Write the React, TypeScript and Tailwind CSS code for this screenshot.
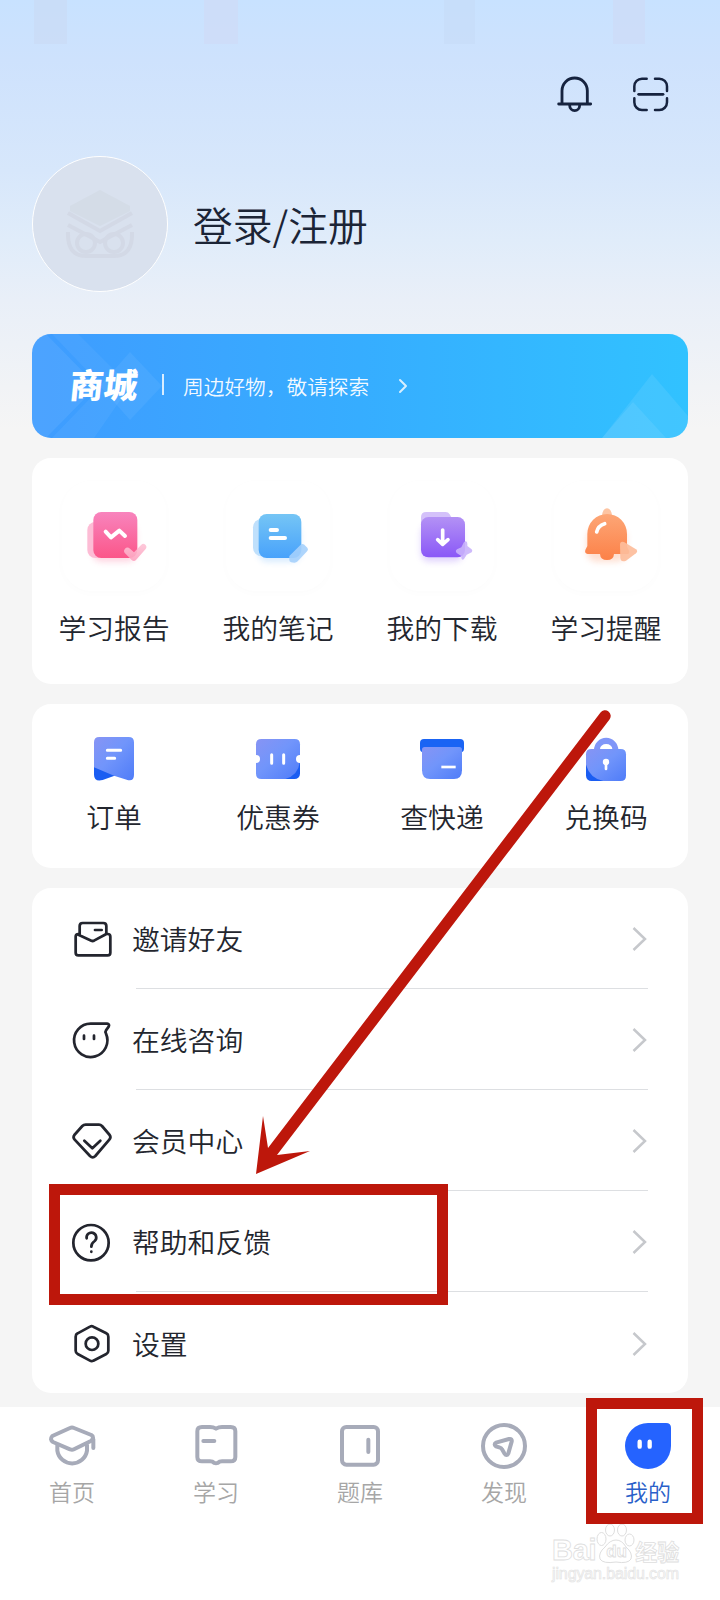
import type { ReactNode } from "react";
import { ChevronRight } from "lucide-react";

const BellIcon = () => (
  <svg viewBox="0 0 108 114" className="w-9 h-[38px]" fill="none" stroke="#16233f" strokeWidth="8.500" strokeLinecap="round">
    <path d="M15 83V44a38 38 0 0 1 76 0V83M5 84H101" />
    <path d="M38 88a15 16 0 0 0 30 0" />
  </svg>
);

const ScanIcon = () => (
  <svg viewBox="0 0 108 108" className="w-9 h-9" fill="none" stroke="#16233f" strokeWidth="7.500" strokeLinecap="round">
    <path d="M4 42V28A23 23 0 0 1 27 5H41M66 5H79a23 23 0 0 1 23 23V42M102 64V76a23 23 0 0 1-23 23H66M41 99H27A23 23 0 0 1 4 76V64" />
    <path d="M17 52H90" strokeWidth="8.500" />
  </svg>
);

const Owl = () => (
  <svg viewBox="0 0 72 72" className="w-[72px] h-[72px]" fill="none" stroke="#d3d9e6" strokeWidth="4">
    <path d="M36 2L66 18V23L36 38L6 23V18Z" fill="#d4dce7" stroke="none" />
    <path d="M4 25L36 43L68 25M4 37L36 54L68 37" />
    <path d="M4 44Q3 68 22 68H50Q69 68 68 44" />
    <circle cx="22" cy="55" r="9" />
    <circle cx="50" cy="55" r="9" />
  </svg>
);

const ReportIcon = () => (
  <svg viewBox="0 0 216 216" className="w-[72px] h-[72px]">
    <defs>
      <linearGradient id="pink" x1="0" y1="0" x2="0" y2="1">
        <stop stopColor="#f884bd" />
        <stop offset="1" stopColor="#fb5689" />
      </linearGradient>
      <linearGradient id="pinkHeart" x1="0" y1="0" x2="0" y2="1">
        <stop stopColor="#fdc3d6" />
        <stop offset="1" stopColor="#fda3c0" />
      </linearGradient>
      <filter id="glow" x="-30%" y="-30%" width="160%" height="160%">
        <feGaussianBlur stdDeviation="9" />
      </filter>
    </defs>
    <rect x="44" y="70" width="130" height="115" rx="24" fill="#fb5689" opacity=".25" filter="url(#glow)" />
    <rect x="28" y="66" width="80" height="108" rx="24" fill="#fdbcd5" />
    <rect x="46" y="36" width="132" height="138" rx="24" fill="url(#pink)" />
    <path d="M83 95L99 112L124 92L141 108" fill="none" stroke="#fff" strokeWidth="12" strokeLinecap="round" strokeLinejoin="round" />
    <path d="M141 146Q148 139 156 146L168 157L190 134Q196 129 202 134Q208 140 203 147L174 180Q168 186 161 180L141 160Q135 153 141 146Z" fill="url(#pinkHeart)" opacity=".9" />
  </svg>
);

const NoteIcon = () => (
  <svg viewBox="0 0 216 216" className="w-[72px] h-[72px]">
    <defs>
      <linearGradient id="sky" x1="0" y1="0" x2="0" y2="1">
        <stop stopColor="#75c5f5" />
        <stop offset="1" stopColor="#48a2fb" />
      </linearGradient>
    </defs>
    <rect x="50" y="75" width="125" height="110" rx="24" fill="#48a2fb" opacity=".22" filter="url(#glow)" />
    <rect x="33" y="56" width="80" height="113" rx="26" fill="#bfe0fc" />
    <rect x="50" y="42" width="128" height="132" rx="24" fill="url(#sky)" />
    <path d="M86 90H105M86 114H129" stroke="#fff" strokeWidth="12" strokeLinecap="round" />
    <path d="M142 168L176 134Q181 130 187 134L196 143Q200 148 196 153L167 184Q163 188 157 188L148 187Q142 186 142 180Z" fill="#a5d0fc" opacity=".9" />
  </svg>
);

const DownloadIcon = () => (
  <svg viewBox="0 0 216 216" className="w-[72px] h-[72px]">
    <defs>
      <linearGradient id="violet" x1="0" y1="0" x2="0" y2="1">
        <stop stopColor="#b391f5" />
        <stop offset="1" stopColor="#8a58f7" />
      </linearGradient>
    </defs>
    <rect x="45" y="75" width="125" height="110" rx="24" fill="#8a58f7" opacity=".25" filter="url(#glow)" />
    <path d="M45 90V52Q45 36 61 36H119Q127 36 131 43L142 62Z" fill="#d4c1fa" />
    <rect x="45" y="51" width="132" height="121" rx="22" fill="url(#violet)" />
    <path d="M110 90V130M95 119L110 133L126 119" fill="none" stroke="#fff" strokeWidth="11" strokeLinecap="round" strokeLinejoin="round" />
    <path d="M174 126Q184 120 184 132V138L197 148Q201 152 197 157L182 164L174 177Q168 182 166 174V168L153 160Q146 153 153 148L166 142Z" fill="#c9b3fb" opacity=".9" />
  </svg>
);

const RemindIcon = () => (
  <svg viewBox="0 0 216 216" className="w-[72px] h-[72px]">
    <defs>
      <linearGradient id="orange" x1="0" y1="0" x2="0" y2="1">
        <stop stopColor="#fda676" />
        <stop offset="1" stopColor="#fc8148" />
      </linearGradient>
    </defs>
    <rect x="50" y="85" width="120" height="100" rx="30" fill="#fc8148" opacity=".25" filter="url(#glow)" />
    <path d="M96 48Q98 25 111 25Q124 25 126 48Z" fill="#fdc4a2" />
    <path d="M52 102A59.500 60 0 0 1 171 102V140L177 152Q180 162 170 162H132Q131 180 111 180Q91 180 90 162H53Q43 160 46 150L52 138Z" fill="url(#orange)" />
    <path d="M80 96Q84 77 104 71" fill="none" stroke="#fff" strokeWidth="11" strokeLinecap="round" />
    <path d="M150 134Q150 122 162 126L198 148Q205 153 198 160L168 182Q152 188 151 173Z" fill="#fdbd9b" opacity=".92" />
  </svg>
);

const OrderIcon = () => (
  <svg viewBox="0 0 168 168" className="w-14 h-14">
    <defs>
      <linearGradient id="blue" x1="0" y1="0" x2="1" y2="1">
        <stop stopColor="#8794f4" />
        <stop offset=".45" stopColor="#7195fb" />
        <stop offset="1" stopColor="#4f7cf8" />
      </linearGradient>
    </defs>
    <path d="M24 100H90V136L50 150Q24 156 24 134Z" fill="#1a5df2" />
    <path d="M40 21H128Q144 21 144 37V134Q144 156 122 149L84 137L24 112V37Q24 21 40 21Z" fill="url(#blue)" />
    <path d="M64 61H104M64 85H86" stroke="#fff" strokeWidth="9" strokeLinecap="round" />
  </svg>
);

const CouponIcon = () => (
  <svg viewBox="0 0 168 168" className="w-14 h-14">
    <rect x="80" y="75" width="70" height="72" rx="16" fill="#1a5df2" />
    <path d="M34 27H134Q150 27 150 43V94Q145 136 106 147H34Q18 147 18 131V43Q18 27 34 27Z" fill="url(#blue)" />
    <circle cx="18" cy="87" r="12" fill="#fff" />
    <circle cx="150" cy="87" r="12" fill="#fff" />
    <path d="M65 74V100M101 74V100" stroke="#fff" strokeWidth="9" strokeLinecap="round" />
  </svg>
);

const ExpressIcon = () => (
  <svg viewBox="0 0 168 168" className="w-14 h-14">
    <path d="M30 27H138Q150 27 150 39V56Q150 66 140 66H28Q18 66 18 56V39Q18 27 30 27Z" fill="#1a64f4" />
    <path d="M32 51H136Q144 51 144 59V121Q144 147 120 147H48Q24 147 24 121V59Q24 51 32 51Z" fill="url(#blue)" />
    <path d="M82 111H125" stroke="#fff" strokeWidth="8" />
  </svg>
);

const RedeemIcon = () => (
  <svg viewBox="0 0 168 168" className="w-14 h-14">
    <path d="M48 62V60A36.500 36.500 0 0 1 121 60V62H103V57A18.500 15 0 0 0 66 57V62Z" fill="#8096f8" />
    <rect x="24" y="75" width="80" height="78" rx="16" fill="#1a5df2" />
    <path d="M40 57H128Q144 57 144 73V137Q144 153 128 153H76Q35 144 24 104V73Q24 57 40 57Z" fill="url(#blue)" />
    <circle cx="84" cy="96" r="9.500" fill="#fff" />
    <path d="M84 98V117" stroke="#fff" strokeWidth="8" strokeLinecap="round" />
  </svg>
);

function LineIcon({ children }: { children: ReactNode }) {
  return (
    <svg
      viewBox="0 0 144 144"
      className="w-12 h-12 shrink-0"
      fill="none"
      stroke="#23252e"
      strokeWidth="8.200"
      strokeLinecap="round"
      strokeLinejoin="round"
    >
      {children}
    </svg>
  );
}

function TabIcon({ children }: { children: ReactNode }) {
  return (
    <svg
      viewBox="0 0 168 168"
      className="w-14 h-14"
      fill="none"
      stroke="#a7abb9"
      strokeWidth="12"
      strokeLinecap="round"
      strokeLinejoin="round"
    >
      {children}
    </svg>
  );
}

const studyItems = [
  { name: "学习报告", icon: ReportIcon },
  { name: "我的笔记", icon: NoteIcon },
  { name: "我的下载", icon: DownloadIcon },
  { name: "学习提醒", icon: RemindIcon },
];

const orderItems = [
  { name: "订单", icon: OrderIcon },
  { name: "优惠券", icon: CouponIcon },
  { name: "查快递", icon: ExpressIcon },
  { name: "兑换码", icon: RedeemIcon },
];

const menuItems = [
  {
    name: "邀请好友",
    icon: (
      <>
        <path d="M35 56V33Q35 24 44 24H106Q115 24 115 33V56" />
        <path d="M35 57H31Q23 57 23 65V113Q23 121 31 121H119Q127 121 127 113V65Q127 57 119 57H115L78 77Q74 79 70 77L28 58M81 45H101" />
      </>
    ),
  },
  {
    name: "在线咨询",
    icon: (
      <path d="M68 23A50 50 0 1 0 114 53Q111 47 114 43L122 32Q126 24 117 23ZM48 59V69M78 59V69" />
    ),
  },
  {
    name: "会员中心",
    icon: (
      <path d="M53 23H93Q98 23 102 27L125 54Q130 61 124 68L82 117Q74 125 66 117L20 68Q14 61 19 54L43 27Q47 23 53 23ZM49 71L73 94L97 71" />
    ),
  },
  {
    name: "帮助和反馈",
    icon: (
      <>
        <circle cx="69" cy="74" r="53" />
        <path d="M56 61A14.500 14.500 0 1 1 80 69Q70 76 70 86M70 101V101.500" />
      </>
    ),
  },
  {
    name: "设置",
    icon: (
      <>
        <path d="M66 23Q71 20 76 23L115 43Q121 46 121 53V95Q121 102 115 105L76 125Q71 128 66 125L29 105Q23 102 23 95V53Q23 46 29 43Z" />
        <circle cx="72" cy="74" r="19" />
      </>
    ),
  },
];

const tabs = [
  {
    name: "首页",
    icon: (
      <>
        <path d="M78 30Q84 27 90 30L142 51Q152 57 142 68L90 94Q84 97 78 94L27 72Q16 65 25 54Z" />
        <path d="M148 64V90M40 82V98A45 45 0 0 0 129 98V82" />
      </>
    ),
  },
  {
    name: "学习",
    icon: (
      <path d="M42 27H66Q76 27 84 32Q92 27 102 27H128Q142 27 142 40V117Q142 130 128 130H102Q94 130 89 135Q84 137 79 135Q74 130 66 130H42Q28 130 28 117V40Q28 27 42 27ZM46 69H79" />
    ),
  },
  {
    name: "题库",
    icon: (
      <>
        <rect x="30" y="27" width="108" height="113" rx="13" />
        <path d="M109 65V102" />
      </>
    ),
  },
  {
    name: "发现",
    icon: (
      <>
        <circle cx="84" cy="84" r="63" />
        <path d="M60 74L99 63Q109 61 107 71L97 106Q92 116 85 106L78 94Q76 90 72 89L60 85Q52 79 60 74Z" />
      </>
    ),
  },
  {
    name: "我的",
    active: true,
    icon: (
      <>
        <path d="M84 15H138Q153 15 153 30V84A69 69 0 1 1 84 15Z" fill="#2563ff" stroke="none" />
        <path d="M59 71V86M89 71V86" stroke="#fff" strokeWidth="13" />
      </>
    ),
  },
];

function Watermark() {
  return (
    <div className="absolute left-[552px] top-[1523px] w-[132px] text-white font-[Liberation_Sans,'Noto_Sans_CJK_SC',sans-serif]">
      <div className="flex items-end h-[42px] leading-none [-webkit-text-stroke:0.8px_#dedede]">
        <span className="text-[29px] font-bold tracking-[-0.3px]">Bai</span>
        <div className="relative w-[39px] h-[42px] shrink-0">
          <svg viewBox="0 0 39 42" className="w-[39px] h-[42px]" fill="#fff" stroke="#dedede" strokeWidth="1">
            <ellipse cx="5.500" cy="16" rx="4.500" ry="6.500" />
            <ellipse cx="14" cy="7" rx="4.500" ry="6" />
            <ellipse cx="26" cy="7" rx="4.500" ry="6" />
            <ellipse cx="33.500" cy="17" rx="4.500" ry="6" />
            <path d="M20 17Q26 17 30 24Q37 30 35 36Q32 41 20 39Q7 41 4 36Q2 30 9 24Q14 17 20 17Z" />
          </svg>
          <span className="absolute left-[10px] top-[20px] text-[17px] font-bold">du</span>
        </div>
        <span className="text-[22px] font-bold pb-px whitespace-nowrap">经验</span>
      </div>
      <div className="-mt-px text-[16px] leading-5 tracking-[-0.12px] text-[#fafafa] [-webkit-text-stroke:0.6px_#e2e2e2]">
        jingyan.baidu.com
      </div>
    </div>
  );
}

export default function App() {
  return (
    <div className="relative w-[720px] h-[1600px] overflow-hidden flex flex-col bg-[#f5f5f5] bg-[linear-gradient(180deg,#c8e2ff_0px,#cee2fd_60px,#d7e7fb_170px,#e0ecfa_240px,#e9eff8_300px,#f5f5f5_430px)] text-[#23262e] font-[350] font-['Noto_Sans_CJK_SC',sans-serif]">
      {/* Status bar */}
      <div className="flex h-11 shrink-0 pl-[34px]">
        <div className="w-[33px] bg-[#c9daf3]/60" />
        <div className="ml-[137px] w-[34px] bg-[#cedcf7]/70" />
        <div className="ml-[206px] w-[31px] bg-[#c6dcf6]/60" />
        <div className="ml-[138px] w-8 bg-[#cddcf6]/70" />
      </div>

      {/* Top actions */}
      <div className="flex justify-end items-center gap-10 h-[100px] shrink-0 pr-[51px] pt-0.5">
        <BellIcon />
        <ScanIcon />
      </div>

      {/* Profile */}
      <div className="flex items-center gap-[25px] h-[158px] shrink-0 px-8 pt-px">
        <div className="w-[136px] h-[136px] rounded-full border border-white bg-[#d9e1ee] flex items-center justify-center">
          <Owl />
        </div>
        <div className="text-[39.800px] leading-none text-[#1b2436]">登录/注册</div>
      </div>

      {/* Mall banner */}
      <div className="relative mx-8 mt-8 h-[104px] shrink-0 rounded-[19px] overflow-hidden bg-gradient-to-r from-[#3f9cff] via-[#36adff] to-[#31c2ff] flex items-center pl-[38px] text-white">
        <svg viewBox="0 0 656 104" className="absolute inset-0 w-full h-full" fill="#fff">
          <path d="M14 0L65 52L14 104H0V0Z" opacity=".07" />
          <path d="M46 0L98 52L62 104H20L70 52L20 0Z" opacity=".05" />
          <path d="M98 18L130 52L98 86L68 52Z" opacity=".06" />
          <path d="M620 40L656 82V104H570Z" opacity=".08" />
          <path d="M601 68L634 104H570Z" opacity=".08" />
        </svg>
        <div className="relative text-[34px] leading-none font-black -skew-x-6 -mt-1">商城</div>
        <div className="relative w-0.5 h-[21px] ml-6 -mt-1 bg-white/80" />
        <div className="relative ml-[19px] text-[20.700px] leading-none text-white/95">周边好物，敬请探索</div>
        <ChevronRight className="relative ml-[22px] w-6 h-6 text-white/80" />
      </div>

      {/* Study tools */}
      <div className="mx-8 mt-5 h-[226px] shrink-0 rounded-[19px] bg-white grid grid-cols-4">
        {studyItems.map((item) => {
          const Icon = item.icon;
          return (
            <div key={item.name} className="flex flex-col items-center pt-[23px]">
              <div className="w-[104px] h-[110px] rounded-[30px] shadow-[0_2px_10px_rgba(0,0,0,0.015)] flex justify-center pt-[19px]">
                <Icon />
              </div>
              <div className="mt-[23px] text-[27.800px] leading-none whitespace-nowrap">{item.name}</div>
            </div>
          );
        })}
      </div>

      {/* Orders */}
      <div className="mx-8 mt-5 h-[164px] shrink-0 rounded-[19px] bg-white grid grid-cols-4">
        {orderItems.map((item) => {
          const Icon = item.icon;
          return (
            <div key={item.name} className="flex flex-col items-center pt-[26px]">
              <Icon />
              <div className="mt-[17px] text-[27.800px] leading-none whitespace-nowrap">{item.name}</div>
            </div>
          );
        })}
      </div>

      {/* Menu */}
      <div className="mx-8 mt-5 h-[505px] shrink-0 rounded-[19px] bg-white flex flex-col">
        {menuItems.map((item, i) => (
          <div key={item.name} className="flex h-[101px] pl-9 pr-10">
            <div className="flex items-center">
              <LineIcon>{item.icon}</LineIcon>
            </div>
            <div
              className={`flex flex-1 items-center justify-between ml-5 pt-0.5 ${i < menuItems.length - 1 ? "border-b border-[#dddfe2]" : ""}`}
            >
              <span className="-ml-1 text-[27.800px] leading-none">{item.name}</span>
              <svg viewBox="0 0 16 26" className="w-4 h-[26px]" fill="none" stroke="#c6c8cc" strokeWidth="2.500">
                <path d="M1.500 2L13 13L1.500 24" />
              </svg>
            </div>
          </div>
        ))}
      </div>

      {/* Tab bar */}
      <div className="mt-3.5 flex-1 bg-white grid grid-cols-5">
        {tabs.map((tab) => (
          <div key={tab.name} className="flex flex-col items-center pt-[11px]">
            <TabIcon>{tab.icon}</TabIcon>
            <div
              className={`mt-1.5 text-[23px] leading-none ${tab.active ? "text-[#2a5fc9]" : "text-[#a6a6a6]"}`}
            >
              {tab.name}
            </div>
          </div>
        ))}
      </div>

      <Watermark />

      {/* Guide marks */}
      <div className="absolute left-[49px] top-[1184px] w-[399px] h-[121px] border-[11px] border-[#bd170b]" />
      <div className="absolute left-[586px] top-[1398px] w-[117px] h-[126px] border-[11px] border-[#bd170b]" />
      <svg viewBox="0 0 720 1600" className="absolute inset-0 w-[720px] h-[1600px] pointer-events-none" fill="#bd170b">
        <path d="M600.500 712.500A5.500 5.500 0 0 1 609.500 719.500L277 1155L310 1151L256 1174L263 1116L268 1148Z" />
      </svg>
    </div>
  );
}
